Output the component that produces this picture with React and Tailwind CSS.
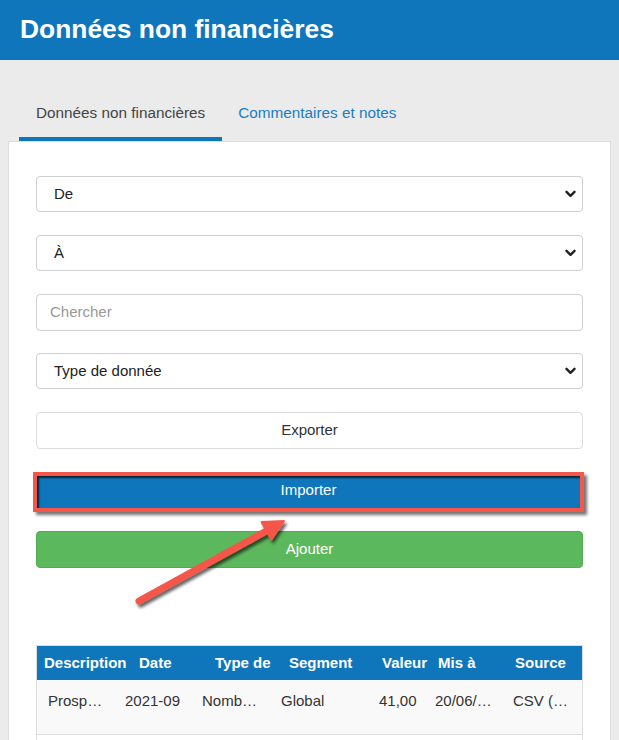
import React from "react";

const font = { fontFamily: '"Liberation Sans", Arial, sans-serif' };

function Chevron() {
  return (
    <svg width="11" height="8" viewBox="0 0 11 8" className="shrink-0">
      <path d="M1.5 1.8 L5.5 5.8 L9.5 1.8" fill="none" stroke="#222" strokeWidth="2.4" strokeLinecap="round" strokeLinejoin="round" />
    </svg>
  );
}

function Select({ label, className = "" }) {
  return (
    <div className={`h-[36px] flex items-center justify-between rounded-[4px] border border-[#cfcfcf] bg-white pl-[17px] pr-[6px] ${className}`}>
      <span className="text-[15px] text-[#222]">{label}</span>
      <Chevron />
    </div>
  );
}

const cols = [
  { w: "w-[78px]", h: "Description", hp: "pl-[7px]", v: "Prosp…", vp: "pl-[11px]" },
  { w: "w-[77px]", h: "Date", hp: "pl-[24px]", v: "2021-09", vp: "pl-[10px]" },
  { w: "w-[79px]", h: "Type de", hp: "pl-[23px]", v: "Nomb…", vp: "pl-[10px]" },
  { w: "w-[98px]", h: "Segment", hp: "pl-[18px]", v: "Global", vp: "pl-[10px]" },
  { w: "w-[56px]", h: "Valeur", hp: "pl-[13px]", v: "41,00", vp: "pl-[10px]" },
  { w: "w-[78px]", h: "Mis à", hp: "pl-[13px]", v: "20/06/…", vp: "pl-[10px]" },
  { w: "w-[80px]", h: "Source", hp: "pl-[12px]", v: "CSV (…", vp: "pl-[10px]" },
];

export default function App() {
  return (
    <div className="relative w-[619px] h-[740px] overflow-hidden bg-[#ebebeb]" style={font}>
      <div className="h-[60px] bg-[#0f76bc] flex items-center pl-[20px]">
        <h1 className="text-[26.4px] font-bold text-white leading-none -mt-[2px]">Données non financières</h1>
      </div>

      <div className="px-[8px] pt-[30px]">
        <div className="flex pl-[11px]">
          <div className="h-[51px] px-[17px] flex items-center border-b-4 border-[#0f76bc] text-[15.3px] text-[#444]">
            Données non financières
          </div>
          <div className="h-[51px] px-[16px] flex items-center border-b-4 border-transparent text-[15.3px] text-[#1a7dc4]">
            Commentaires et notes
          </div>
        </div>

        <div className="bg-white border border-[#dddddd] w-[603px] h-[700px] px-[27px] pt-[34px]">
          <Select label="De" />
          <Select label="À" className="mt-[23px]" />
          <div className="mt-[23px] h-[37px] flex items-center rounded-[4px] border border-[#cfcfcf] bg-white pl-[13px] text-[15px] text-[#999]">
            Chercher
          </div>
          <Select label="Type de donnée" className="mt-[22px]" />
          <div className="mt-[23px] h-[37px] flex items-center justify-center rounded-[4px] border border-[#dddddd] bg-white text-[15px] text-[#333]">
            Exporter
          </div>
          <div className="mt-[23px] -ml-[3px] -mr-[1px] h-[40px] border-4 border-[#f5564a] shadow-[3px_3px_3px_rgba(0,0,0,0.55)]">
            <div className="h-full bg-[#0f76bc] shadow-[inset_2px_2px_2px_rgba(0,0,0,0.7)] flex items-center justify-center pb-[3px] text-[15px] text-white">
              Importer
            </div>
          </div>
          <div className="mt-[19px] h-[37px] flex items-center justify-center rounded-[4px] border border-[#4cae4c] bg-[#5cb85c] text-[15px] text-white">
            Ajouter
          </div>

          <div className="mt-[77px] border border-[#dddddd]">
            <div className="flex h-[34px] bg-[#0f76bc] items-center">
              {cols.map((c) => (
                <div key={c.h} className={`${c.w} ${c.hp} shrink-0 text-[15px] font-bold text-white whitespace-nowrap`}>
                  {c.h}
                </div>
              ))}
            </div>
            <div className="flex h-[55px] bg-[#f9f9f9] border-b border-[#dddddd] pt-[10px]">
              {cols.map((c) => (
                <div key={c.h} className={`${c.w} ${c.vp} shrink-0 text-[15px] text-[#333] whitespace-nowrap`}>
                  {c.v}
                </div>
              ))}
            </div>
            <div className="h-[40px] bg-white"></div>
          </div>
        </div>
      </div>

      <svg className="absolute left-0 top-0 pointer-events-none" width="619" height="740" viewBox="0 0 619 740">
        <defs>
          <filter id="sh" x="-20%" y="-20%" width="140%" height="140%">
            <feDropShadow dx="2" dy="3" stdDeviation="1.8" floodColor="#000" floodOpacity="0.6" />
          </filter>
        </defs>
        <g filter="url(#sh)">
          <line x1="139" y1="601" x2="270" y2="529" stroke="#f5564a" strokeWidth="7" strokeLinecap="round" />
          <polygon points="284,521 261.6,522 271.4,539.4" fill="#f5564a" stroke="#f5564a" strokeWidth="2" strokeLinejoin="round" />
        </g>
      </svg>
    </div>
  );
}
